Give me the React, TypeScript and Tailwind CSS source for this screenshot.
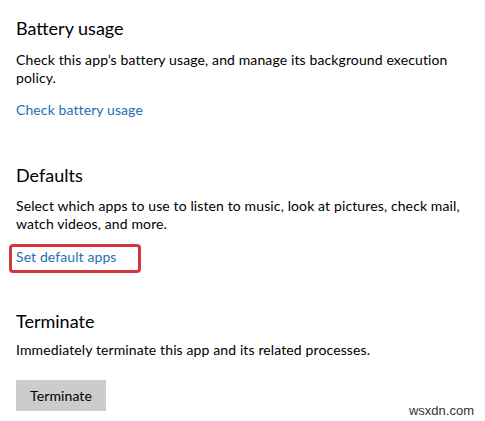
import React from 'react';

const font = { fontFamily: 'Lato, "Noto Sans", sans-serif' };

function Section({
  title,
  children,
  className = '',
}: {
  title: string;
  children: React.ReactNode;
  className?: string;
}) {
  return (
    <section className={className}>
      <h2 className="text-[18px] leading-[24px] font-normal text-black">{title}</h2>
      {children}
    </section>
  );
}

export default function App() {
  return (
    <div
      className="relative w-[485px] h-[421px] bg-white overflow-hidden pl-4 pt-4"
      style={font}
    >
      {/* Battery usage */}
      <Section title="Battery usage">
        <p className="mt-[11px] w-[445px] text-[14px] leading-[18px] tracking-[0.12px] text-black">
          Check this app’s battery usage, and manage its background execution policy.
        </p>
        <a href="#" className="mt-[14px] block w-fit text-[14px] leading-[18px] tracking-[0.1px] text-[#1e6fb0]">
          Check battery usage
        </a>
      </Section>

      {/* Defaults */}
      <Section title="Defaults" className="mt-[44px]">
        <p className="mt-[10px] w-[455px] text-[14px] leading-[18px] tracking-[0.12px] text-black">
          Select which apps to use to listen to music, look at pictures, check mail, watch videos, and more.
        </p>
        <a href="#" className="relative mt-[15px] block w-fit text-[14px] leading-[18px] tracking-[0.1px] text-[#1e6fb0]">
          Set default apps
          {/* red highlight annotation */}
          <span className="absolute left-[-7px] top-[-4px] w-[132px] h-[29px] rounded-[4px] border-[3px] border-[#d4373d]" />
        </a>
      </Section>

      {/* Terminate */}
      <Section title="Terminate" className="mt-[43px]">
        <p className="mt-[8px] text-[14px] leading-[18px] tracking-[0.12px] text-black">
          Immediately terminate this app and its related processes.
        </p>
        <button className="mt-[21px] flex h-[31px] w-[90px] items-center justify-center bg-[#cccccc] text-[14px] leading-[18px] tracking-[0.1px] text-black">
          Terminate
        </button>
      </Section>

      {/* watermark */}
      <span
        className="absolute right-[11px] top-[403px] text-[13px] leading-[15px] text-[#333333]"
        style={{ fontFamily: '"Liberation Sans", Arial, sans-serif' }}
      >
        wsxdn.com
      </span>
    </div>
  );
}
